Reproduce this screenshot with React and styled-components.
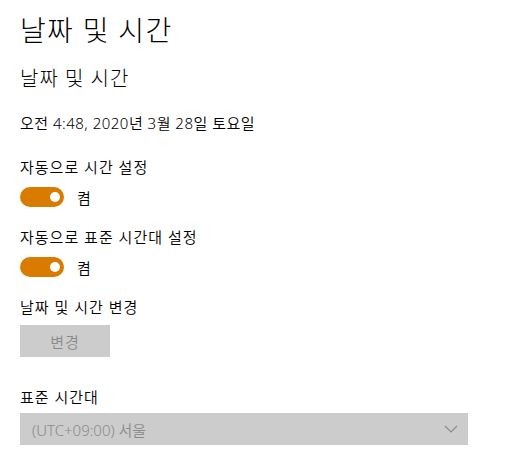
import React from 'react'
import styled, { createGlobalStyle } from 'styled-components'

const GlobalStyle = createGlobalStyle`
  html, body {
    margin: 0;
    padding: 0;
    background: #ffffff;
  }
  body {
    font-family: "Noto Sans", "Noto Sans CJK KR", sans-serif;
    color: #000000;
  }
`

const Page = styled.div`
  padding: 12px 20px 0 20px;
  width: 476px;
`

const Title = styled.h1`
  margin: 0;
  font-size: 28px;
  line-height: 36px;
  font-weight: 300;
  letter-spacing: 1.3px;
`

const SubTitle = styled.h2`
  margin: 17px 0 0 0;
  font-size: 20px;
  line-height: 28px;
  font-weight: 300;
  letter-spacing: 1px;
`

const Text = styled.div`
  margin-top: ${p => p.$top || 0}px;
  font-size: 15px;
  line-height: 20px;
  font-weight: 350;
  letter-spacing: ${p => p.$spacing ?? 1}px;
  color: #000;
`

const ToggleRow = styled.div`
  display: flex;
  align-items: center;
  gap: 13px;
  margin-top: 10px;
  height: 20px;
  font-size: 15px;
  font-weight: 350;
`

const Track = styled.div`
  width: 44px;
  height: 20px;
  border-radius: 10px;
  background: #d97b00;
  display: flex;
  align-items: center;
  justify-content: flex-end;
  padding-right: 4px;
  box-sizing: border-box;
`

const Knob = styled.span`
  width: 10px;
  height: 10px;
  border-radius: 50%;
  background: #ffffff;
`

const Button = styled.div`
  margin-top: 8px;
  width: 90px;
  height: 32px;
  background: #cccccc;
  color: #8a8a8a;
  font-size: 15px;
  font-weight: 350;
  letter-spacing: 1px;
  display: flex;
  align-items: center;
  justify-content: center;
`

const Select = styled.div`
  margin-top: 6px;
  width: 448px;
  height: 32px;
  background: #cccccc;
  color: #8a8a8a;
  font-size: 15px;
  font-weight: 350;
  display: flex;
  align-items: center;
  justify-content: space-between;
  padding: 0 10px 0 12px;
  box-sizing: border-box;
`

function Toggle() {
  return (
    <ToggleRow>
      <Track><Knob /></Track>
      <span>켬</span>
    </ToggleRow>
  )
}

export default function App() {
  return (
    <>
      <GlobalStyle />
      <Page>
        <Title>날짜 및 시간</Title>
        <SubTitle>날짜 및 시간</SubTitle>
        <Text $top={20} $spacing={0.5}>오전 4:48, 2020년 3월 28일 토요일</Text>

        <Text $top={24}>자동으로 시간 설정</Text>
        <Toggle />

        <Text $top={20}>자동으로 표준 시간대 설정</Text>
        <Toggle />

        <Text $top={20}>날짜 및 시간 변경</Text>
        <Button>변경</Button>

        <Text $top={30}>표준 시간대</Text>
        <Select>
          <span>(UTC+09:00) 서울</span>
          <svg width="14" height="8" viewBox="0 0 14 8">
            <path d="M1 1 L7 7 L13 1" fill="none" stroke="#8a8a8a" strokeWidth="1.1" />
          </svg>
        </Select>
      </Page>
    </>
  )
}
